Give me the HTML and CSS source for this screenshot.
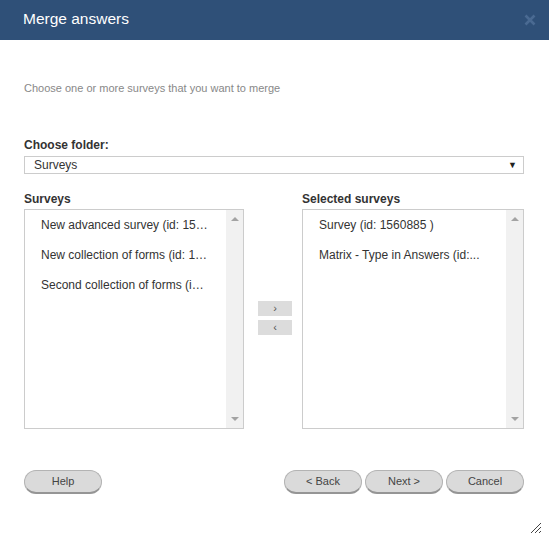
FILE: index.html
```html
<!DOCTYPE html>
<html lang="en">

<head>
    <meta charset="UTF-8">
    <meta name="viewport" content="width=device-width, initial-scale=1.0">
    <title>Merge answers</title>
    <link rel="stylesheet" href="styles.css">
</head>

<body>
    <div class="dialog">
        <div class="titlebar">
            <h1>Merge answers</h1>
            <svg class="close" width="12" height="12" viewBox="0 0 12 12">
                <path d="M1.5 1.5 L10.5 10.5 M10.5 1.5 L1.5 10.5" stroke="#4a6a92" stroke-width="2.6" />
            </svg>
        </div>

        <div class="content">
            <p class="intro">Choose one or more surveys that you want to merge</p>

            <div class="field-label">Choose folder:</div>
            <div class="select">
                <span>Surveys</span>
                <span class="select-arrow">&#9660;</span>
            </div>

            <div class="lists">
                <div class="list-col">
                    <div class="list-label">Surveys</div>
                    <div class="listbox">
                        <ul class="items">
                            <li>New advanced survey (id: 15…</li>
                            <li>New collection of forms (id: 1…</li>
                            <li>Second collection of forms (i…</li>
                        </ul>
                        <div class="scrollbar">
                            <span class="arrow-up"></span>
                            <span class="arrow-down"></span>
                        </div>
                    </div>
                </div>

                <div class="move-btns">
                    <button type="button" class="move">&rsaquo;</button>
                    <button type="button" class="move">&lsaquo;</button>
                </div>

                <div class="list-col">
                    <div class="list-label">Selected surveys</div>
                    <div class="listbox">
                        <ul class="items">
                            <li>Survey (id: 1560885 )</li>
                            <li>Matrix - Type in Answers (id:...</li>
                        </ul>
                        <div class="scrollbar">
                            <span class="arrow-up"></span>
                            <span class="arrow-down"></span>
                        </div>
                    </div>
                </div>
            </div>

            <div class="footer">
                <button type="button" class="pill">Help</button>
                <div class="nav">
                    <button type="button" class="pill">&lt; Back</button>
                    <button type="button" class="pill">Next &gt;</button>
                    <button type="button" class="pill">Cancel</button>
                </div>
            </div>
        </div>

        <svg class="grip" width="12" height="13" viewBox="0 0 12 13">
            <path d="M11 2 L1 12 M11 6 L5 12 M11 10 L9 12" stroke="#444" stroke-width="1" />
        </svg>
    </div>
</body>
</html>
```

FILE: styles.css
```css
* {
    padding: 0;
    margin: 0;
    box-sizing: border-box;
}
body {
    font-family: "Liberation Sans", Arial, sans-serif;
    background: #fff;
    color: #333;
}
.dialog {
    width: 549px;
    height: 536px;
    position: relative;
}
.titlebar {
    height: 40px;
    background: #2f5078;
    display: flex;
    align-items: center;
    justify-content: space-between;
    padding: 0 13px 2px 23px;
}
.titlebar h1 {
    color: #fff;
    font-size: 15.5px;
    font-weight: normal;
}
.close {
    margin-top: 1px;
}
.content {
    padding: 0 25px 0 24px;
}
.intro {
    padding-top: 41px;
    font-size: 11px;
    line-height: 14px;
    color: #888;
}
.field-label,
.list-label {
    font-size: 12px;
    line-height: 16px;
    font-weight: bold;
    color: #333;
}
.field-label {
    margin-top: 42px;
}
.select {
    margin-top: 3px;
    height: 18px;
    border: 1px solid #ccc;
    display: flex;
    align-items: center;
    justify-content: space-between;
    padding: 0 6px 0 9px;
    font-size: 12px;
    color: #333;
}
.select-arrow {
    font-size: 9px;
    color: #222;
}
.lists {
    display: grid;
    grid-template-columns: 220px 58px 222px;
    margin-top: 17px;
}
.list-label {
    margin-bottom: 2px;
}
.listbox {
    height: 220px;
    border: 1px solid #ccc;
    display: flex;
}
.items {
    flex: 1;
    list-style: none;
    padding: 7px 0 0 16px;
    font-size: 12px;
    color: #333;
}
.items li {
    height: 30px;
    line-height: 16px;
    white-space: nowrap;
}
.scrollbar {
    width: 17px;
    background: #f1f1f1;
    display: flex;
    flex-direction: column;
    justify-content: space-between;
    align-items: center;
    padding: 7px 0 7px;
}
.arrow-up {
    border-left: 4px solid transparent;
    border-right: 4px solid transparent;
    border-bottom: 4px solid #a3a3a3;
}
.arrow-down {
    border-left: 4px solid transparent;
    border-right: 4px solid transparent;
    border-top: 4px solid #a3a3a3;
}
.move-btns {
    display: flex;
    flex-direction: column;
    justify-content: center;
    gap: 4px;
    padding: 16px 0 0 14px;
}
.move {
    width: 34px;
    height: 15px;
    border: none;
    background: #dcdcdc;
    color: #555;
    font-family: "Liberation Sans", Arial, sans-serif;
    font-size: 11px;
    line-height: 15px;
}
.footer {
    margin-top: 41px;
    display: flex;
    justify-content: space-between;
}
.nav {
    display: flex;
    gap: 3px;
}
.pill {
    width: 78px;
    height: 24px;
    border: 1px solid #b3b3b3;
    border-bottom: 2px solid #959595;
    border-radius: 12px;
    background: #dadada;
    color: #444;
    font-family: "Liberation Sans", Arial, sans-serif;
    font-size: 11px;
    padding-bottom: 1px;
}
.grip {
    position: absolute;
    right: 7px;
    bottom: 2px;
}
```
